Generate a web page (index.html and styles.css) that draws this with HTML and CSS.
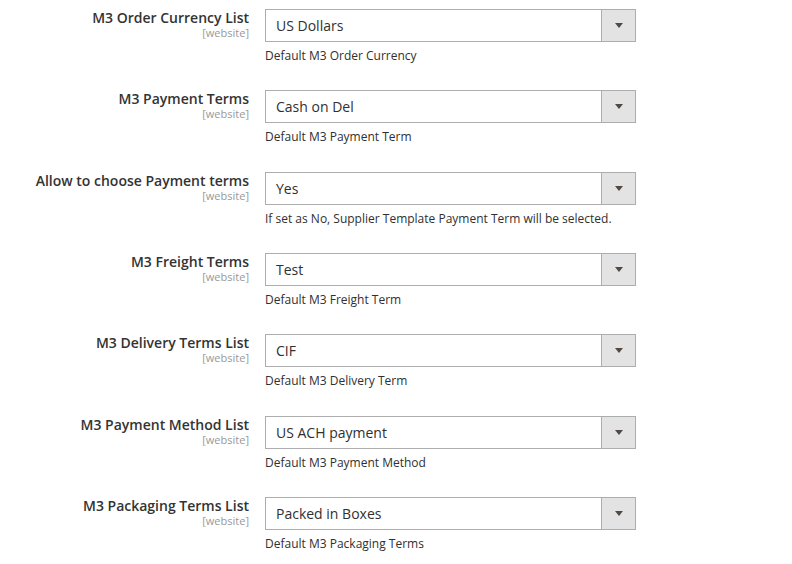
FILE: index.html
```html
<!DOCTYPE html>
<html>
<head>
<meta charset="utf-8">
<link rel="stylesheet" href="styles.css">
</head>
<body>
<div class="form">
  <div class="row">
    <div class="label"><span class="title">M3 Order Currency List</span><span class="scope">[website]</span></div>
    <div class="control">
      <div class="select"><span class="value">US Dollars</span><span class="btn"><i class="arrow"></i></span></div>
      <div class="note">Default M3 Order Currency</div>
    </div>
  </div>
  <div class="row">
    <div class="label"><span class="title">M3 Payment Terms</span><span class="scope">[website]</span></div>
    <div class="control">
      <div class="select"><span class="value">Cash on Del</span><span class="btn"><i class="arrow"></i></span></div>
      <div class="note">Default M3 Payment Term</div>
    </div>
  </div>
  <div class="row">
    <div class="label"><span class="title">Allow to choose Payment terms</span><span class="scope">[website]</span></div>
    <div class="control">
      <div class="select"><span class="value">Yes</span><span class="btn"><i class="arrow"></i></span></div>
      <div class="note">If set as No, Supplier Template Payment Term will be selected.</div>
    </div>
  </div>
  <div class="row">
    <div class="label"><span class="title">M3 Freight Terms</span><span class="scope">[website]</span></div>
    <div class="control">
      <div class="select"><span class="value">Test</span><span class="btn"><i class="arrow"></i></span></div>
      <div class="note">Default M3 Freight Term</div>
    </div>
  </div>
  <div class="row">
    <div class="label"><span class="title">M3 Delivery Terms List</span><span class="scope">[website]</span></div>
    <div class="control">
      <div class="select"><span class="value">CIF</span><span class="btn"><i class="arrow"></i></span></div>
      <div class="note">Default M3 Delivery Term</div>
    </div>
  </div>
  <div class="row">
    <div class="label"><span class="title">M3 Payment Method List</span><span class="scope">[website]</span></div>
    <div class="control">
      <div class="select"><span class="value">US ACH payment</span><span class="btn"><i class="arrow"></i></span></div>
      <div class="note">Default M3 Payment Method</div>
    </div>
  </div>
  <div class="row">
    <div class="label"><span class="title">M3 Packaging Terms List</span><span class="scope">[website]</span></div>
    <div class="control">
      <div class="select"><span class="value">Packed in Boxes</span><span class="btn"><i class="arrow"></i></span></div>
      <div class="note">Default M3 Packaging Terms</div>
    </div>
  </div>
</div>
</body>
</html>
```

FILE: styles.css
```css
html, body {
  margin: 0;
  padding: 0;
  background: #ffffff;
}
body {
  font-family: "Open Sans", "Liberation Sans", sans-serif;
  color: #303030;
}
.form {
  display: flex;
  flex-direction: column;
  gap: 26.33px;
  padding-top: 9px;
}
.row {
  display: flex;
  gap: 16px;
}
.label {
  width: 249px;
  display: flex;
  flex-direction: column;
  align-items: flex-end;
  text-align: right;
}
.title {
  font-size: 14px;
  line-height: 17px;
  font-weight: 600;
  color: #333333;
}
.scope {
  font-size: 11px;
  line-height: 13px;
  color: #999999;
}
.control {
  width: 371px;
  display: flex;
  flex-direction: column;
}
.select {
  height: 33px;
  box-sizing: border-box;
  border: 1px solid #adadad;
  display: flex;
  align-items: center;
  background: #ffffff;
}
.value {
  flex: 1;
  font-size: 14px;
  padding-left: 10px;
  color: #303030;
}
.btn {
  width: 33px;
  height: 31px;
  border-left: 1px solid #adadad;
  background: #e3e3e3;
  display: flex;
  align-items: center;
  justify-content: center;
}
.arrow {
  display: block;
  width: 0;
  height: 0;
  border-left: 4px solid transparent;
  border-right: 4px solid transparent;
  border-top: 5px solid #514943;
}
.note {
  font-size: 12px;
  line-height: 16px;
  margin-top: 6px;
  color: #303030;
}
```
